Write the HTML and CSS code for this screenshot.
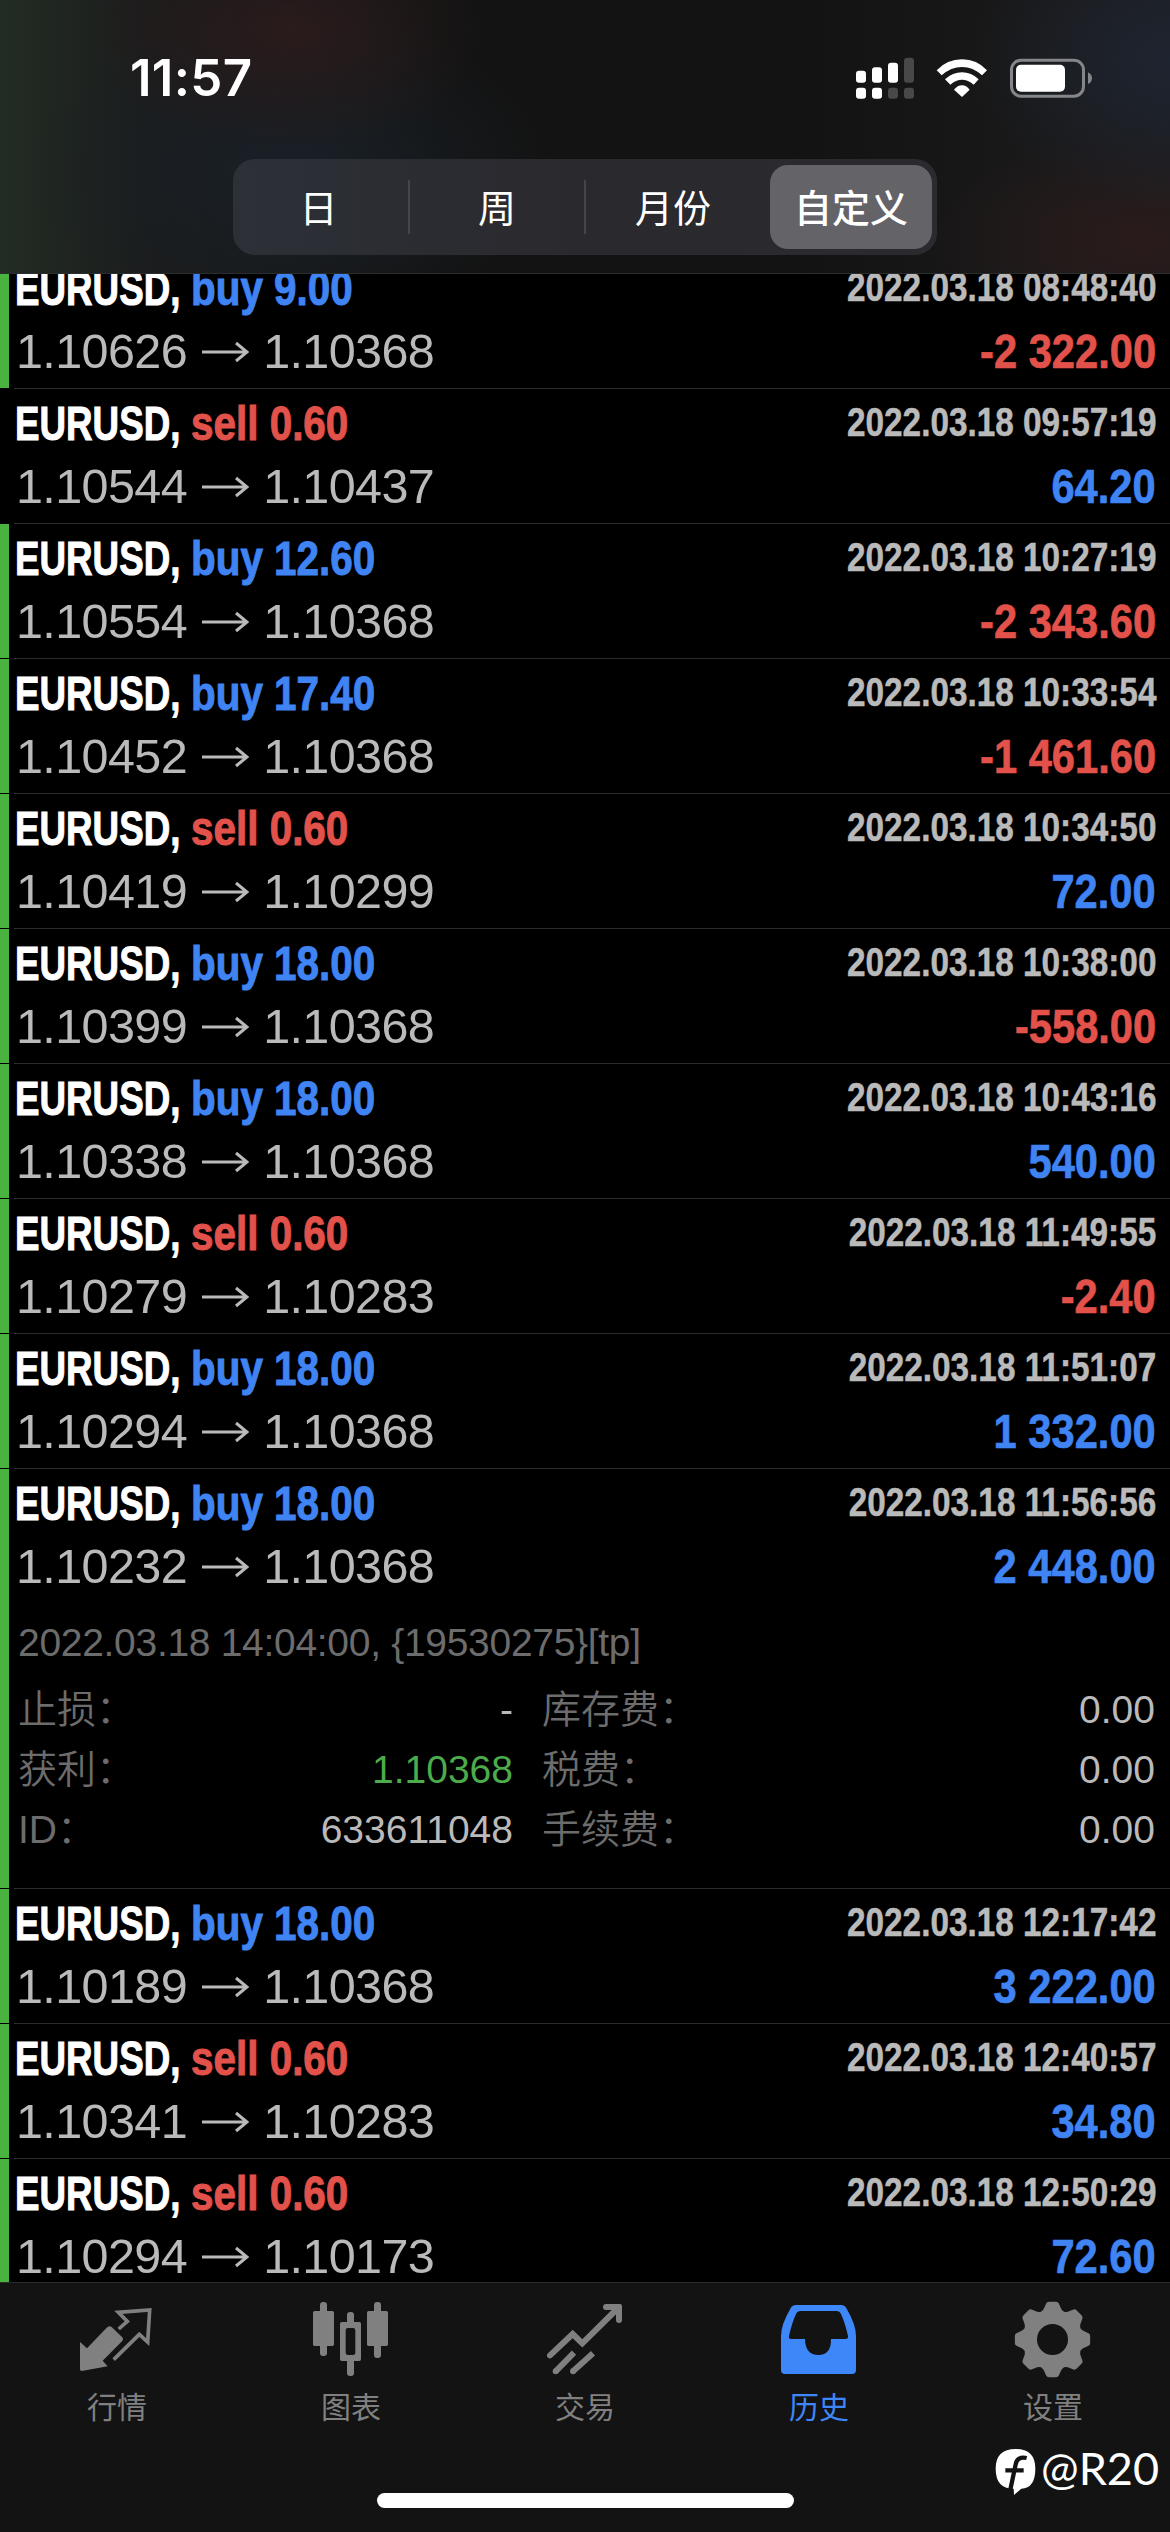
FILE: index.html
```html
<!DOCTYPE html>
<html lang="zh-CN">
<head>
<meta charset="utf-8">
<title>历史</title>
<link rel="stylesheet" href="styles.css">
</head>
<body>
<div class="phone">
  <header class="top">
    <div class="status">
      <span class="time">11:57</span>
      <div class="status-icons">
        <svg width="60" height="44" viewBox="45 46 180 132" fill="#fff"><rect x="48" y="90" width="30" height="36" rx="9"/><rect x="96" y="80" width="30" height="46" rx="9"/><rect x="144" y="66" width="30" height="60" rx="9"/><rect x="192" y="51" width="30" height="75" rx="9" fill="#484848"/><rect x="48" y="141" width="30" height="33" rx="9"/><rect x="96" y="141" width="30" height="33" rx="9"/><rect x="144" y="141" width="30" height="33" rx="9" fill="#484848"/><rect x="192" y="141" width="30" height="33" rx="9" fill="#484848"/></svg>
        <svg class="wifi" width="52" height="44" viewBox="287 46 156 132" fill="#fff"><path d="M289 89Q320 56 365 56T440 89L425 104Q398 79 365 79T304 104Z"/><path d="M314 116Q337 95 365 95T415 116L400 132Q383 117 365 117T330 132Z"/><path d="M341 147Q352 134 365 134T388 147L365 169Z"/></svg>
        <svg width="84" height="44" viewBox="504 46 252 132"><rect x="511.500" y="58.500" width="216" height="108" rx="29" fill="none" stroke="#85868a" stroke-width="9"/><rect x="525" y="72" width="147" height="81" rx="15" fill="#fff"/><path d="M741 95Q753 101 753 113T741 130Z" fill="#85868a"/></svg>
      </div>
    </div>
    <nav class="segments">
      <span class="segment">日</span>
      <span class="segment divided">周</span>
      <span class="segment divided">月份</span>
      <span class="segment selected">自定义</span>
    </nav>
  </header>
  <main class="deals" id="deals"></main>
  <footer class="tabs">
    <div class="tab">
      <svg width="80" height="80" viewBox="231 120 240 240"><path fill="currentColor" d="M240 246L261 265L320 203Q327 195 335 201L366 231Q372 237 366 244L308 302L323 319L245 333Q240 333 240 328Z"/><path fill="none" stroke="currentColor" stroke-width="11" d="M356 207L382 184L355 157L449 150L443 246L418 223L341 299"/></svg>
      <span>行情</span>
    </div>
    <div class="tab">
      <svg width="80" height="80" viewBox="933 120 240 240" fill="currentColor"><rect x="960" y="126" width="21" height="162" rx="9"/><rect x="939" y="153" width="63" height="105" rx="5"/><rect x="1122" y="126" width="21" height="168" rx="9"/><rect x="1101" y="153" width="63" height="105" rx="5"/><rect x="1041" y="156" width="21" height="36" rx="9"/><rect x="1041" y="296" width="21" height="52" rx="9"/><path fill-rule="evenodd" d="M1025 186H1078Q1083 186 1083 191V297Q1083 303 1078 303H1025Q1020 303 1020 297V191Q1020 186 1025 186ZM1044 204Q1037 204 1037 211V278Q1037 285 1044 285H1059Q1066 285 1066 278V211Q1066 204 1059 204Z"/></svg>
      <span>图表</span>
    </div>
    <div class="tab">
      <svg width="80" height="80" viewBox="435 120 240 240" fill="none" stroke="currentColor" stroke-width="18"><path stroke-linecap="round" d="M450 286L518 222L547 250L645 153M618 141H655M657 145V180"/><path d="M467 334L522 278M519 334L579 280"/><path fill="currentColor" stroke="none" d="M620 132H660Q666 132 666 138V180L642 158Z"/><circle cx="467" cy="334" r="9" fill="currentColor" stroke="none"/><circle cx="519" cy="334" r="9" fill="currentColor" stroke="none"/></svg>
      <span>交易</span>
    </div>
    <div class="tab active">
      <svg width="80" height="80" viewBox="27 120 240 240" fill="currentColor"><path fill-rule="evenodd" d="M78 135H213Q225 135 230 146Q258 194 258 228V330Q258 342 246 342H45Q33 342 33 330V228Q33 194 61 146Q66 135 78 135ZM92 153Q82 153 78 162Q66 188 57 228Q55 237 64 237H105Q106 285 145 285T183 237H226Q236 237 234 228Q225 188 213 162Q209 153 199 153Z"/></svg>
      <span>历史</span>
    </div>
    <div class="tab">
      <svg width="80" height="80" viewBox="729 120 240 240"><g fill="currentColor" transform="translate(847.500 238.500)"><path id="tooth" d="M-34 -84Q-27 -88 -24 -97L-19 -108Q-17 -113 -10 -113H10Q17 -113 19 -108L24 -97Q27 -88 34 -84L30 -60H-30Z"/><use href="#tooth" transform="rotate(45)"/><use href="#tooth" transform="rotate(90)"/><use href="#tooth" transform="rotate(135)"/><use href="#tooth" transform="rotate(180)"/><use href="#tooth" transform="rotate(225)"/><use href="#tooth" transform="rotate(270)"/><use href="#tooth" transform="rotate(315)"/><circle r="68" fill="none" stroke="currentColor" stroke-width="43"/></g></svg>
      <span>设置</span>
    </div>
  </footer>
  <div class="home-bar"></div>
  <div class="watermark">
    <svg width="42" height="48" viewBox="675 564 126 144"><path fill="#fff" d="M737 567Q796 567 796 626Q796 684 754 686L732 705L731 686Q677 686 677 626Q677 567 737 567Z"/><path fill="none" stroke="#131313" stroke-width="13" d="M770 594Q742 588 737 613L721 689M706 631H761"/></svg>
    <span>@R20</span>
  </div>
</div>
<script src="deals.js"></script>
</body>
</html>
```
FILE: styles.css
```css
body {
  margin: 0;
  background: #000;
}
.phone {
  position: relative;
  display: flex;
  flex-direction: column;
  width: 1170px;
  height: 2532px;
  overflow: hidden;
  background: #000;
  color: #bababa;
  font-family: "Liberation Sans", "Noto Sans CJK SC", sans-serif;
}
.top {
  flex: none;
  box-sizing: border-box;
  height: 274px;
  border-bottom: 1px solid #2b2c2e;
  background:
    radial-gradient(ellipse 200px 120px at 290px 30px, #2a1b1c, transparent),
    radial-gradient(ellipse 200px 150px at 1170px 60px, #1e2430, transparent),
    radial-gradient(ellipse 220px 110px at 1140px 240px, #2a1b1b, transparent),
    radial-gradient(ellipse 260px 160px at 290px 170px, #192027, transparent),
    linear-gradient(90deg, #222c24 0, #1b1c1c 150px, #131313 450px, #131313 800px, #1c1c1d 1170px);
}
.status {
  display: flex;
  justify-content: space-between;
  align-items: center;
  height: 60px;
  padding: 48px 77px 51px 130px;
}
.time {
  color: #fff;
  font: 600 51px/60px "Inter", sans-serif;
  letter-spacing: 0.3px;
}
.status-icons {
  display: flex;
  gap: 21px;
}
.segments {
  display: flex;
  box-sizing: border-box;
  width: 704px;
  height: 96px;
  margin: 0 auto;
  padding: 6px 5px 6px 0;
  border-radius: 22px;
  background: linear-gradient(90deg, #2c3037, #2a292e 50%, #2b2a2e);
}
.segment {
  display: flex;
  position: relative;
  flex: 0 0 176px;
  align-items: center;
  justify-content: center;
  box-sizing: border-box;
  padding: 0 5px 3px 0;
  color: #fff;
  font: 400 38px/50px "Noto Sans CJK SC", sans-serif;
}
.segment.divided::before {
  content: "";
  position: absolute;
  left: -1px;
  top: 15px;
  width: 2px;
  height: 54px;
  background: #44444a;
}
.segment.divided {
  padding-right: 0;
}
.segment.selected {
  flex: 0 0 162px;
  margin-left: auto;
  padding-right: 0;
  border-radius: 18px;
  background: #646368;
  font-weight: 500;
}
.deals {
  flex: 1;
  margin-top: -20px;
  min-height: 0;
  overflow: hidden;
  clip-path: inset(20px 0 0 0);
}
.deal {
  display: flex;
  box-sizing: border-box;
  min-height: 135px;
  border-bottom: 1px solid #2c2c2c;
  border-image: linear-gradient(90deg, #000 15px, #2c2c2c 15px) 1;
}
.marker {
  flex: none;
  width: 9px;
}
.marker.on {
  background: #48b33f;
}
.body {
  flex: 1;
  padding: 3px 14px 0 6px;
}
.line {
  display: flex;
  justify-content: space-between;
  height: 63px;
  font-size: 49px;
  line-height: 63px;
  white-space: nowrap;
}
.title,
.date,
.profit {
  font-weight: 700;
}
.title {
  display: flex;
  -webkit-text-stroke: 1px currentColor;
}
.symbol {
  width: 176px;
  color: #fff;
  transform: scaleX(0.75);
  transform-origin: left;
}
.side {
  transform: scaleX(0.825);
  transform-origin: left;
}
.buy, .plus { color: #3f84f2; }
.sell, .minus { color: #e2524a; }
.date {
  font-size: 40px;
  line-height: 61px;
  transform: scaleX(0.833);
  transform-origin: right;
  -webkit-text-stroke: 0.5px currentColor;
}
.profit {
  transform: scaleX(0.85);
  transform-origin: right;
  -webkit-text-stroke: 0.7px currentColor;
}
.prices {
  display: flex;
  align-items: center;
  padding-left: 1px;
  font-size: 48.5px;
  letter-spacing: -0.6px;
}
.prices svg {
  margin: 0 14px 0 14px;
}
.details {
  padding: 20px 0 0 3px;
  color: #6c6c6c;
  font-size: 39px;
}
.comment {
  height: 63px;
  line-height: 50px;
  letter-spacing: -0.3px;
}
.grid {
  display: grid;
  grid-template-columns: 495px 613px;
  column-gap: 29px;
  height: 207px;
  align-content: start;
}
.pair {
  display: flex;
  justify-content: space-between;
  height: 60px;
  line-height: 58px;
}
.label {
  font-weight: 350;
}
.value { color: #bababa; }
.value.target { color: #4cab4b; }
.tabs {
  display: flex;
  flex: none;
  box-sizing: border-box;
  height: 250px;
  padding-top: 17px;
  border-top: 1px solid #2b2b2b;
  background: #131313;
}
.tab {
  display: flex;
  flex: 1;
  flex-direction: column;
  align-items: center;
  color: #808080;
  font: 400 30px/44px "Noto Sans CJK SC", sans-serif;
}
.tab span { margin-top: 3px; }
.tab.active { color: #3d87f8; }
.home-bar {
  position: absolute;
  left: 377px;
  top: 2493px;
  width: 417px;
  height: 15px;
  border-radius: 8px;
  background: #fff;
}
.watermark {
  position: absolute;
  left: 995px;
  top: 2448px;
  display: flex;
  gap: 4px;
  color: #fff;
  font: 400 45px/40px "Lato", sans-serif;
}
```
FILE: deals.js
```js
const deals = [
  ["buy", "9.00", "08:48:40", "1.10626", "1.10368", "-2 322.00"],
  ["sell", "0.60", "09:57:19", "1.10544", "1.10437", "64.20"],
  ["buy", "12.60", "10:27:19", "1.10554", "1.10368", "-2 343.60"],
  ["buy", "17.40", "10:33:54", "1.10452", "1.10368", "-1 461.60"],
  ["sell", "0.60", "10:34:50", "1.10419", "1.10299", "72.00"],
  ["buy", "18.00", "10:38:00", "1.10399", "1.10368", "-558.00"],
  ["buy", "18.00", "10:43:16", "1.10338", "1.10368", "540.00"],
  ["sell", "0.60", "11:49:55", "1.10279", "1.10283", "-2.40"],
  ["buy", "18.00", "11:51:07", "1.10294", "1.10368", "1 332.00"],
  ["buy", "18.00", "11:56:56", "1.10232", "1.10368", "2 448.00", true],
  ["buy", "18.00", "12:17:42", "1.10189", "1.10368", "3 222.00"],
  ["sell", "0.60", "12:40:57", "1.10341", "1.10283", "34.80"],
  ["sell", "0.60", "12:50:29", "1.10294", "1.10173", "72.60"]
];

const details = `
  <div class="details">
    <div class="comment">2022.03.18 14:04:00, {19530275}[tp]</div>
    <div class="grid">
      <div class="pair"><span class="label">止损：</span><span class="value">-</span></div>
      <div class="pair"><span class="label">库存费：</span><span class="value">0.00</span></div>
      <div class="pair"><span class="label">获利：</span><span class="value target">1.10368</span></div>
      <div class="pair"><span class="label">税费：</span><span class="value">0.00</span></div>
      <div class="pair"><span class="label">ID：</span><span class="value">633611048</span></div>
      <div class="pair"><span class="label">手续费：</span><span class="value">0.00</span></div>
    </div>
  </div>`;

document.getElementById("deals").innerHTML = deals.map(([side, lots, time, open, close, profit, expanded]) => `
  <section class="deal">
    <div class="marker ${profit === "64.20" ? "" : "on"}"></div>
    <div class="body">
      <div class="line">
        <div class="title"><span class="symbol">EURUSD,</span><span class="side ${side}">${side} ${lots}</span></div>
        <span class="date">2022.03.18 ${time}</span>
      </div>
      <div class="line">
        <div class="prices"><span>${open}</span><svg width="48" height="22" viewBox="0 0 48 22" fill="none" stroke="#bababa" stroke-width="3"><path d="M1 11H45M35 2L46 11L35 20"/></svg><span>${close}</span></div>
        <span class="profit ${profit[0] === "-" ? "minus" : "plus"}">${profit}</span>
      </div>
      ${expanded ? details : ""}
    </div>
  </section>`).join("");
```
